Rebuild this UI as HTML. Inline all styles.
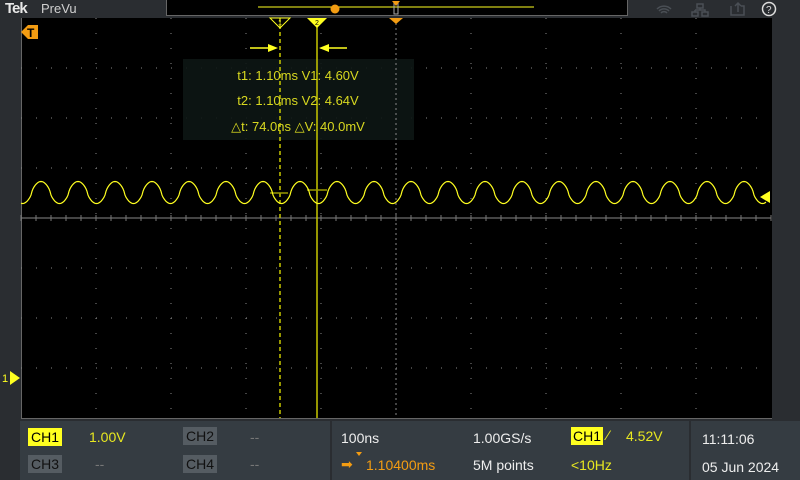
<!DOCTYPE html>
<html><head><style>
body{margin:0;width:800px;height:480px;background:#2a2d31;overflow:hidden;font-family:"Liberation Sans",sans-serif;position:relative}
.a{position:absolute}
.lbl{position:absolute;font-size:14px;line-height:18px}
</style></head><body>
<div class="a" style="left:5px;top:0;color:#e8e8e8;font-weight:bold;font-size:15px;letter-spacing:-1px">Tek</div>
<div class="a" style="left:41px;top:1px;color:#d0d0d0;font-size:13px">PreVu</div>
<div class="a" style="left:166px;top:0;width:460px;height:15px;background:#000;border:1px solid #666;border-top:none"></div>
<svg class="a" style="left:0;top:0" width="800" height="480">
<line x1="258" y1="7" x2="534" y2="7" stroke="#ffff20" stroke-width="1"/>
<circle cx="335" cy="9" r="4.5" fill="#f39c12"/>
<rect x="394" y="2" width="4" height="12" fill="none" stroke="#aaa" stroke-width="1"/>
<polygon points="392,1 400,1 396,6" fill="#f39c12"/>
<g stroke="#4a4f55" fill="none" stroke-width="1.5">
<path d="M657 9 a10 10 0 0 1 14 0 M659 11 a7 7 0 0 1 10 0 M661 13 a4 4 0 0 1 6 0"/>
<path d="M697 4 h6 v4 h-6z M692 12 h6 v4 h-6z M702 12 h6 v4 h-6z M700 8 v2 M695 10 h10 v2 M695 10 v2"/>
<path d="M731 6 v9 h13 v-9 h-3 M738 12 v-9 M735 6 l3-3 3 3"/>
</g>
<circle cx="769" cy="9" r="6.5" fill="none" stroke="#ddd" stroke-width="1.5"/>
<text x="766" y="13" font-size="10" fill="#ddd" font-family="Liberation Sans">?</text>
</svg>
<div class="a" style="left:21px;top:18px;width:750px;height:400px;background:#000;border-left:1px solid #666;border-bottom:1px solid #666"></div>
<svg class="a" style="left:0;top:0" width="800" height="480" id="sv">
<g id="grid" stroke="#777" stroke-width="1"></g>
<rect x="183" y="59" width="231" height="81" fill="#0d1613" opacity="0.92"/>
<line x1="280" y1="18" x2="280" y2="418" stroke="#c8c800" stroke-width="1.5" stroke-dasharray="4,3"/>
<line x1="317" y1="18" x2="317" y2="418" stroke="#c8c800" stroke-width="1.5"/>
<line x1="396" y1="18" x2="396" y2="418" stroke="#888" stroke-width="1" stroke-dasharray="2,3"/>
<polygon points="270,18 290,18 280,28" fill="none" stroke="#ffff20"/>
<polygon points="307,18 327,18 317,28" fill="#ffff20"/>
<text x="278" y="25" font-size="7" fill="#ffff20">1</text>
<text x="315" y="25" font-size="7" fill="#000">2</text>
<polygon points="389,18 403,18 396,24" fill="#f39c12"/>
<line x1="250" y1="48" x2="270" y2="48" stroke="#ffff20" stroke-width="1.5"/><polygon points="268,44 278,48 268,52" fill="#ffff20"/>
<line x1="327" y1="48" x2="347" y2="48" stroke="#ffff20" stroke-width="1.5"/><polygon points="329,44 319,48 329,52" fill="#ffff20"/>
<line x1="270" y1="193" x2="288" y2="193" stroke="#999900" stroke-width="1.5"/>
<line x1="307" y1="190" x2="327" y2="190" stroke="#999900" stroke-width="1.5"/>
<path id="wave" fill="none" stroke="#ffff20" stroke-width="1.2"/>
<polygon points="770,191 760,197 770,203" fill="#ffff20"/>
<polygon points="10,371 20,378 10,385" fill="#ffff20"/>
<text x="2" y="382" font-size="11" fill="#ffff20">1</text>
<path d="M21 32 l7-7 h10 v14 h-10z" fill="#f39c12"/>
<text x="27" y="37" font-size="12" font-weight="bold" fill="#000">T</text>
<text x="298" y="80" font-size="13" fill="#d8d820" text-anchor="middle">t1: 1.10ms  V1: 4.60V</text>
<text x="298" y="105" font-size="13" fill="#d8d820" text-anchor="middle">t2: 1.10ms  V2: 4.64V</text>
<text x="298" y="131" font-size="13" fill="#d8d820" text-anchor="middle">△t: 74.0ns  △V: 40.0mV</text>
</svg>
<div class="a" style="left:20px;top:421px;width:310px;height:59px;background:#353c42"></div>
<div class="a" style="left:332px;top:421px;width:357px;height:59px;background:#353c42"></div>
<div class="a" style="left:691px;top:421px;width:109px;height:59px;background:#353c42"></div>
<div class="lbl" style="left:28px;top:428px;background:#ffff20;color:#000;padding:0 3px">CH1</div>
<div class="lbl" style="left:89px;top:428px;color:#e8e820">1.00V</div>
<div class="lbl" style="left:183px;top:427px;background:#555c62;color:#111;padding:0 3px">CH2</div>
<div class="lbl" style="left:250px;top:428px;color:#777">--</div>
<div class="lbl" style="left:28px;top:455px;background:#555c62;color:#111;padding:0 3px">CH3</div>
<div class="lbl" style="left:95px;top:455px;color:#777">--</div>
<div class="lbl" style="left:183px;top:455px;background:#555c62;color:#111;padding:0 3px">CH4</div>
<div class="lbl" style="left:250px;top:455px;color:#777">--</div>
<div class="lbl" style="left:341px;top:429px;color:#eee">100ns</div>
<div class="lbl" style="left:341px;top:455px;color:#f39c12">➡</div>
<div class="a" style="left:356px;top:452px;width:0;height:0;border:3px solid transparent;border-top:4px solid #f39c12"></div>
<div class="lbl" style="left:366px;top:456px;color:#f39c12">1.10400ms</div>
<div class="lbl" style="left:473px;top:429px;color:#eee">1.00GS/s</div>
<div class="lbl" style="left:473px;top:456px;color:#eee">5M points</div>
<div class="lbl" style="left:571px;top:427px;background:#ffff20;color:#000;padding:0 2px">CH1</div>
<div class="lbl" style="left:607px;top:426px;color:#e8e820">⁄</div>
<div class="lbl" style="left:626px;top:427px;color:#e8e820">4.52V</div>
<div class="lbl" style="left:571px;top:456px;color:#e8e820">&lt;10Hz</div>
<div class="lbl" style="left:702px;top:430px;color:#eee">11:11:06</div>
<div class="lbl" style="left:702px;top:458px;color:#eee">05 Jun 2024</div>
<script>
var g=document.getElementById('grid'),s='';
for(var i=1;i<10;i++){var x=21+75*i;s+='<line x1="'+x+'" y1="18" x2="'+x+'" y2="418" stroke-dasharray="1,14" stroke="#888"/>';}
for(var j=1;j<8;j++){var y=18+50*j;s+='<line x1="21" y1="'+y+'" x2="771" y2="'+y+'" stroke-dasharray="1,14" stroke="#888"/>';}
s+='<line x1="21" y1="218" x2="771" y2="218" stroke="#888"/>';
for(var i=0;i<=50;i++){var x=21+15*i;s+='<line x1="'+x+'" y1="215" x2="'+x+'" y2="221" stroke="#777"/>';}
g.innerHTML=s;
var d='';
for(var x=21;x<=766;x++){var p=(x-41)/37*2*Math.PI;var v=Math.cos(p);v=Math.sign(v)*Math.pow(Math.abs(v),0.7);var y=192.5-11*v;d+=(x==21?'M':'L')+x+' '+y.toFixed(1);}
document.getElementById('wave').setAttribute('d',d);
</script>
</body></html>
